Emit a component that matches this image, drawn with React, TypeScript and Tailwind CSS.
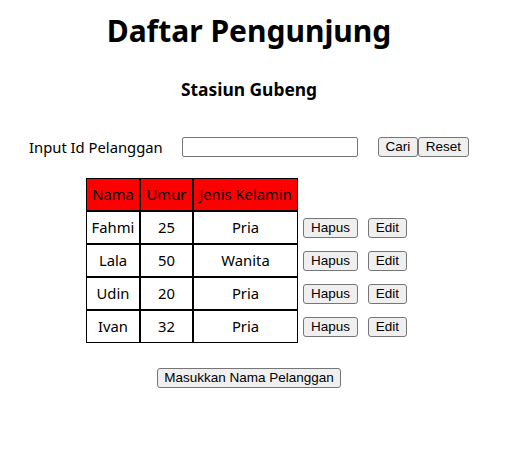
import React from "react";

const rows = [
  { nama: "Fahmi", umur: 25, jk: "Pria" },
  { nama: "Lala", umur: 50, jk: "Wanita" },
  { nama: "Udin", umur: 20, jk: "Pria" },
  { nama: "Ivan", umur: 32, jk: "Pria" },
];

const btn =
  "h-[20px] border border-[#767676] rounded-[3px] bg-[#efefef] text-black text-[13.5px] leading-none text-center font-['Liberation_Sans',Arial,sans-serif]";

export default function App() {
  return (
    <div className="min-h-[471px] bg-white text-black font-['Noto_Sans',sans-serif]">
      <div className="ml-[8px] w-[482px] pt-[16px] text-center">
        <h1 className="h-[30px] text-[30px] font-bold leading-none">Daftar Pengunjung</h1>
        <h3 className="mt-[35px] h-[18px] text-[17.4px] font-bold leading-none">Stasiun Gubeng</h3>
      </div>

      <div className="mt-[38px] flex items-center pl-[29px] h-[20px]">
        <span className="w-[153px] text-[14.8px] leading-none">Input Id Pelanggan</span>
        <input
          type="text"
          className="w-[176px] h-[20px] border border-[#767676] rounded-[2px] bg-white"
        />
        <button className={`${btn} ml-[20px] w-[40px]`}>Cari</button>
        <button className={`${btn} w-[51px]`}>Reset</button>
      </div>

      <table className="mt-[21px] ml-[86px] border-separate border-spacing-0 text-[14.8px]">
        <thead>
          <tr>
            <th className="w-[54px] h-[33px] p-0 border border-black bg-[#ff0000] font-normal">Nama</th>
            <th className="w-[53px] h-[33px] p-0 border border-black bg-[#ff0000] font-normal">Umur</th>
            <th className="w-[105px] h-[33px] p-0 border border-black bg-[#ff0000] font-normal">Jenis Kelamin</th>
          </tr>
        </thead>
        <tbody>
          {rows.map((r) => (
            <tr key={r.nama}>
              <td className="h-[33px] p-0 border border-black text-center">{r.nama}</td>
              <td className="h-[33px] p-0 border border-black text-center">{r.umur}</td>
              <td className="h-[33px] p-0 border border-black text-center">{r.jk}</td>
              <td className="px-[5px] pt-[1px] align-middle">
                <button className={`${btn} w-[55px] block`}>Hapus</button>
              </td>
              <td className="px-[5px] pt-[1px] align-middle">
                <button className={`${btn} w-[39px] block`}>Edit</button>
              </td>
            </tr>
          ))}
        </tbody>
      </table>

      <div className="mt-[25px] ml-[8px] w-[482px] flex justify-center">
        <button className={`${btn} w-[184px]`}>Masukkan Nama Pelanggan</button>
      </div>
    </div>
  );
}
